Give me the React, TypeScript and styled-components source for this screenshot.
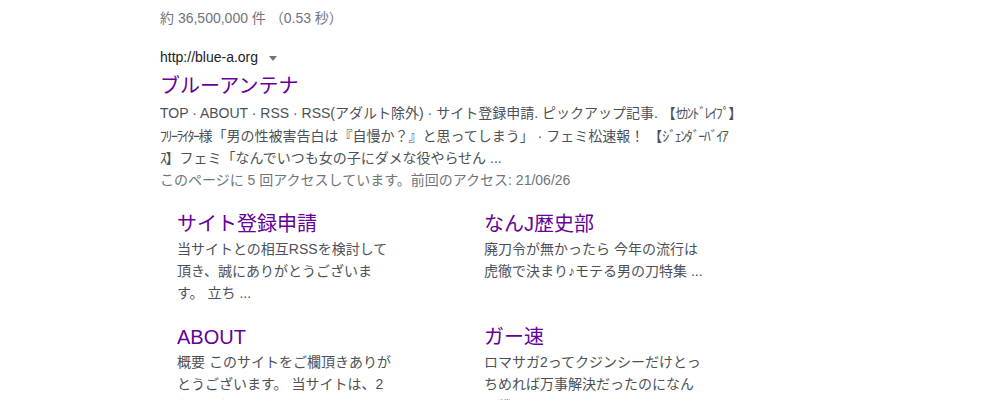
import styled, { createGlobalStyle } from "styled-components";

const GlobalStyle = createGlobalStyle`
  body {
    margin: 0;
    background: #fff;
    font-family: "Liberation Sans", Arial, "Noto Sans CJK JP", sans-serif;
  }
`;

const Page = styled.div`
  padding-left: 160px;
  width: 640px;
`;

const Stats = styled.div`
  padding-top: 7px;
  font-size: 14px;
  line-height: 22px;
  color: #70757a;
`;

const UrlRow = styled.div`
  display: flex;
  align-items: center;
  margin-top: 17px;
  font-size: 14px;
  line-height: 22px;
  color: #202124;
`;

const Arrow = styled.span`
  margin-left: 11px;
  margin-top: 2px;
  border-top: 5px solid #70757a;
  border-left: 4px solid transparent;
  border-right: 4px solid transparent;
`;

const Title = styled.a<{ $top?: number }>`
  display: block;
  padding-top: ${(p) => p.$top ?? 0}px;
  font-size: 20px;
  line-height: 26px;
  color: #660099;
  text-decoration: none;
  cursor: pointer;
`;

const Snippet = styled.div`
  margin-top: 3px;
  font-size: 14px;
  line-height: 22.5px;
  color: #4d5156;
`;

const Line = styled.span`
  display: block;
  white-space: nowrap;
`;

// half-width katakana sit tighter in the original rendering
const Hankaku = styled.span`
  letter-spacing: -1.5px;
`;

const Visited = styled.div`
  font-size: 14px;
  line-height: 21px;
  color: #70757a;
`;

const Sitelinks = styled.div`
  display: grid;
  grid-template-columns: 307px 307px;
  row-gap: 20px;
  margin-top: 20px;
  padding-left: 17px;
`;

const Sitelink = styled.div`
  display: flex;
  flex-direction: column;
`;

const Desc = styled.div`
  margin-top: 1px;
  font-size: 14px;
  line-height: 22px;
  color: #4d5156;
`;

const withHankaku = (text: string) =>
  text.split(/([\uFF61-\uFF9F]+)/).map((part, i) =>
    /[\uFF61-\uFF9F]/.test(part) ? <Hankaku key={i}>{part}</Hankaku> : part
  );

const snippet = [
  "TOP · ABOUT · RSS · RSS(アダルト除外) · サイト登録申請. ピックアップ記事. 【ｾｶﾝﾄﾞﾚｲﾌﾟ】",
  "ﾌﾘｰﾗｲﾀｰ様「男の性被害告白は『自慢か？』と思ってしまう」 · フェミ松速報！ 【ｼﾞｪﾝﾀﾞｰﾊﾞｲｱ",
  "ｽ】フェミ「なんでいつも女の子にダメな役やらせん ...",
];

const links = [
  {
    title: "サイト登録申請",
    lines: ["当サイトとの相互RSSを検討して", "頂き、誠にありがとうございま", "す。 立ち ..."],
  },
  {
    title: "なんJ歴史部",
    lines: ["廃刀令が無かったら 今年の流行は", "虎徹で決まり♪モテる男の刀特集 ..."],
  },
  {
    title: "ABOUT",
    lines: ["概要 このサイトをご欄頂きありが", "とうございます。 当サイトは、2", "ちゃんねる ..."],
  },
  {
    title: "ガー速",
    lines: ["ロマサガ2ってクジンシーだけとっ", "ちめれば万事解決だったのになん", "で戦 ..."],
  },
];

export default function App() {
  return (
    <>
      <GlobalStyle />
      <Page>
        <Stats>約 36,500,000 件 （0.53 秒）</Stats>
        <UrlRow>
          http://blue-a.org
          <Arrow />
        </UrlRow>
        <Title $top={5}>ブルーアンテナ</Title>
        <Snippet>
          {snippet.map((l) => (
            <Line key={l}>{withHankaku(l)}</Line>
          ))}
        </Snippet>
        <Visited>このページに 5 回アクセスしています。前回のアクセス: 21/06/26</Visited>
        <Sitelinks>
          {links.map((s) => (
            <Sitelink key={s.title}>
              <Title>{s.title}</Title>
              <Desc>
                {s.lines.map((l) => (
                  <Line key={l}>{l}</Line>
                ))}
              </Desc>
            </Sitelink>
          ))}
        </Sitelinks>
      </Page>
    </>
  );
}
